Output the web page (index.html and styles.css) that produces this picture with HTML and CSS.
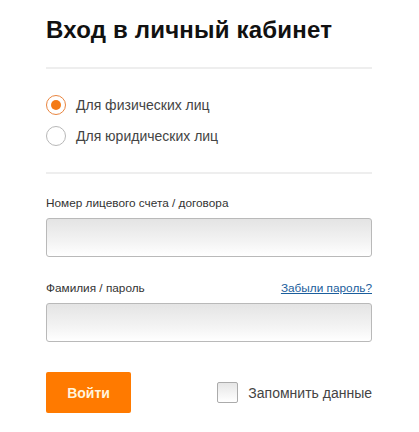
FILE: index.html
```html
<!DOCTYPE html>
<html lang="ru">
<head>
<meta charset="utf-8">
<title>Вход в личный кабинет</title>
<link rel="stylesheet" href="styles.css">
</head>
<body>
<div class="login">
  <h1 class="title">Вход в личный кабинет</h1>
  <div class="divider divider-top"></div>
  <div class="radios">
    <label class="radio-row">
      <span class="radio radio-checked"><span class="radio-dot"></span></span>
      <span class="radio-text">Для физических лиц</span>
    </label>
    <label class="radio-row">
      <span class="radio"></span>
      <span class="radio-text">Для юридических лиц</span>
    </label>
  </div>
  <div class="divider divider-bottom"></div>
  <div class="field-label field-label-first">Номер лицевого счета / договора</div>
  <div class="input"></div>
  <div class="field-label field-label-row">
    <span>Фамилия / пароль</span>
    <a class="forgot" href="#">Забыли пароль?</a>
  </div>
  <div class="input"></div>
  <div class="actions">
    <button class="btn" type="button">Войти</button>
    <label class="remember">
      <span class="checkbox"></span>
      <span class="remember-text">Запомнить данные</span>
    </label>
  </div>
</div>
</body>
</html>
```
FILE: styles.css
```css
html, body {
  margin: 0;
  padding: 0;
  background: #ffffff;
}
body {
  font-family: "Liberation Sans", Arial, sans-serif;
  color: #333333;
}
.login {
  width: 326px;
  margin-left: 46px;
  display: flex;
  flex-direction: column;
}
.title {
  margin: 16px 0 0 0;
  font-size: 24px;
  line-height: 28px;
  font-weight: bold;
  letter-spacing: 0.2px;
  color: #111111;
}
.divider {
  height: 2px;
  background: #eeeeee;
}
.divider-top {
  margin-top: 23px;
}
.radios {
  margin-top: 20px;
  display: flex;
  flex-direction: column;
}
.radio-row {
  height: 31px;
  display: flex;
  align-items: center;
  gap: 10px;
}
.radio {
  box-sizing: border-box;
  width: 20px;
  height: 20px;
  border-radius: 50%;
  border: 1px solid #b8b8b8;
  background: #ffffff;
  display: flex;
  align-items: center;
  justify-content: center;
}
.radio-checked {
  border-color: #e9853f;
}
.radio-dot {
  width: 10px;
  height: 10px;
  border-radius: 50%;
  background: #f47a14;
}
.radio-text {
  font-size: 14px;
  color: #444444;
}
.divider-bottom {
  margin-top: 21px;
}
.field-label {
  font-size: 11.8px;
  line-height: 14px;
  color: #333333;
}
.field-label-first {
  margin-top: 22px;
}
.field-label-row {
  margin-top: 24px;
  display: flex;
  justify-content: space-between;
}
.forgot {
  color: #1b5e9c;
  text-decoration: underline;
}
.input {
  box-sizing: border-box;
  margin-top: 8px;
  height: 39px;
  border: 1px solid #b9b9b9;
  border-radius: 3px;
  background: linear-gradient(to bottom, #e4e4e4 0%, #f3f3f3 60%, #ffffff 100%);
}
.actions {
  margin-top: 30px;
  display: flex;
  align-items: center;
  justify-content: space-between;
}
.btn {
  width: 85px;
  height: 41px;
  border: none;
  border-radius: 2px;
  background: #ff7a00;
  color: #fff4dc;
  font-family: "Liberation Sans", Arial, sans-serif;
  font-size: 14px;
  font-weight: bold;
  padding: 0;
}
.remember {
  display: flex;
  align-items: center;
  gap: 10px;
}
.checkbox {
  box-sizing: border-box;
  width: 21px;
  height: 21px;
  border: 1px solid #ababab;
  border-radius: 2px;
  background: linear-gradient(to bottom, #e6e6e6, #ffffff);
}
.remember-text {
  font-size: 14px;
  color: #444444;
}
```
